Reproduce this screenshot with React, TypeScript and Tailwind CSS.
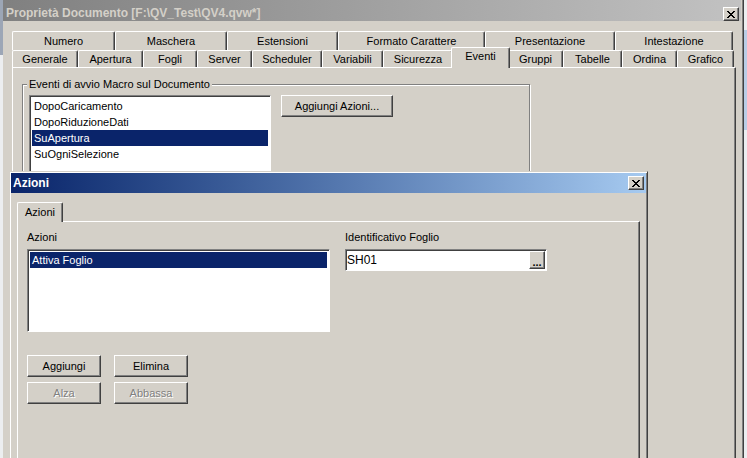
import type { ReactNode } from 'react';

const raised =
    'border border-t-white border-l-white border-r-[#404040] border-b-[#404040] shadow-[inset_-1px_-1px_0_#808080] bg-[#d4d0c8]';
const sunken =
    'border border-t-[#808080] border-l-[#808080] border-r-white border-b-white shadow-[inset_1px_1px_0_#404040] bg-white';

const backRow = [
    { label: 'Numero', w: 'w-[103px]' },
    { label: 'Maschera', w: 'w-[112px]' },
    { label: 'Estensioni', w: 'w-[111px]' },
    { label: 'Formato Carattere', w: 'w-[147px]' },
    { label: 'Presentazione', w: 'w-[130px]' },
    { label: 'Intestazione', w: 'w-[118px]' },
];

const frontRow = [
    { label: 'Generale', w: 'w-[66px]' },
    { label: 'Apertura', w: 'w-[65px]' },
    { label: 'Fogli', w: 'w-[54px]' },
    { label: 'Server', w: 'w-[55px]' },
    { label: 'Scheduler', w: 'w-[70px]' },
    { label: 'Variabili', w: 'w-[61px]' },
    { label: 'Sicurezza', w: 'w-[70px]' },
    { label: 'Eventi', w: 'w-[59px]', active: true },
    { label: 'Gruppi', w: 'w-[55px]' },
    { label: 'Tabelle', w: 'w-[59px]' },
    { label: 'Ordina', w: 'w-[55px]' },
    { label: 'Grafico', w: 'w-[57px]' },
];

const events = ['DopoCaricamento', 'DopoRiduzioneDati', 'SuApertura', 'SuOgniSelezione'];

// classic 8x7 close glyph
const xGlyph = ['11000011', '01100110', '00111100', '00011000', '00111100', '01100110', '11000011'];

function CloseButton() {
    return (
        <div className={`w-[16px] h-[14px] flex items-center justify-center ${raised}`}>
            <svg width="8" height="7" viewBox="0 0 8 7" shapeRendering="crispEdges">
                {xGlyph.map((row, y) =>
                    row.split('').map((c, x) =>
                        c === '1' ? <rect key={`${x}-${y}`} x={x} y={y} width="1" height="1" fill="#000" /> : null
                    )
                )}
            </svg>
        </div>
    );
}

function Button({ children, className = '', disabled }: { children: ReactNode; className?: string; disabled?: boolean }) {
    return (
        <div
            className={`flex items-center justify-center ${raised} ${className} ${
                disabled ? 'text-[#808080] [text-shadow:1px_1px_0_#fff]' : 'text-black'
            }`}
        >
            {children}
        </div>
    );
}

export default function App() {
    return (
        <div className="relative w-[747px] h-[458px] overflow-hidden bg-[#eceef0] font-['Liberation_Sans',Arial,sans-serif] text-[11px] leading-[13px] text-black">
            {/* windows behind */}
            <div className="absolute left-0 top-0 w-[3px] h-[55px] bg-[#9ca6b6]" />
            <div className="absolute right-0 top-[30px] w-[3px] h-[100px] bg-[#b9cde6]" />

            {/* Main window */}
            <div className="absolute left-[3px] top-0 w-[741px] h-[480px] bg-[#d4d0c8] border-r border-r-[#404040] shadow-[inset_-1px_0_0_#808080] flex flex-col">
                {/* Title bar */}
                <div className="h-[21px] mr-[2px] flex justify-between pl-[3px] pr-[2px] bg-linear-to-r from-[#808080] to-[#c2c2c2]">
                    <span className="pt-[6px] text-[12px] leading-[14px] font-bold text-[#d4d0c8]">
                        Proprietà Documento [F:\QV_Test\QV4.qvw*]
                    </span>
                    <div className="self-end">
                        <CloseButton />
                    </div>
                </div>

                {/* Tabs */}
                <div className="pl-[9px] pt-[10px]">
                    <div className="flex h-[19px]">
                        {backRow.map((t) => (
                            <div
                                key={t.label}
                                className={`${t.w} h-[19px] flex justify-center pt-[3px] border-t border-l border-t-white border-l-white border-r border-r-[#404040] shadow-[inset_-1px_0_0_#808080] rounded-t-[2px]`}
                            >
                                {t.label}
                            </div>
                        ))}
                    </div>
                    <div className="flex items-end h-[17px]">
                        {frontRow.map((t) =>
                            t.active ? (
                                <div
                                    key={t.label}
                                    className={`${t.w} -mx-[2px] h-[21px] -mb-[1px] relative z-10 bg-[#d4d0c8] flex justify-center pt-[2px] border-t border-l border-t-white border-l-white border-r border-r-[#404040] shadow-[inset_-1px_0_0_#808080] rounded-t-[2px]`}
                                >
                                    {t.label}
                                </div>
                            ) : (
                                <div
                                    key={t.label}
                                    className={`${t.w} h-[17px] flex items-center justify-center border-t border-l border-t-white border-l-white border-r border-r-[#404040] shadow-[inset_-1px_0_0_#808080] rounded-t-[2px]`}
                                >
                                    {t.label}
                                </div>
                            )
                        )}
                    </div>
                </div>

                {/* Tab panel */}
                <div className="ml-[9px] w-[724px] flex-1 border-t border-l border-t-white border-l-white border-r border-r-[#404040] shadow-[inset_-1px_0_0_#808080] pl-[9px] pt-[10px]">
                    <fieldset className="w-[508px] h-[140px] border border-[#808080] shadow-[inset_1px_1px_0_#fff,1px_1px_0_#fff] pl-[6px] pt-[4px]">
                        <legend className="-ml-[2px] px-[2px] bg-[#d4d0c8] leading-[13px]">
                            Eventi di avvio Macro sul Documento
                        </legend>
                        <div className="flex items-start">
                            <div className={`w-[242px] h-[110px] ${sunken} p-[2px]`}>
                                {events.map((e) => (
                                    <div
                                        key={e}
                                        className={`h-[16px] flex items-center pl-[2px] ${
                                            e === 'SuApertura' ? 'bg-[#0a246a] text-white' : ''
                                        }`}
                                    >
                                        {e}
                                    </div>
                                ))}
                            </div>
                            <Button className="ml-[10px] w-[112px] h-[22px]">Aggiungi Azioni...</Button>
                        </div>
                    </fieldset>
                </div>
            </div>

            {/* Azioni dialog */}
            <div className="absolute left-[9px] top-[171px] w-[639px] h-[300px] bg-[#d4d0c8] border border-[#d4d0c8] border-r-[#404040] border-b-[#404040] shadow-[inset_1px_1px_0_#fff,inset_-1px_-1px_0_#808080] p-[1px] flex flex-col">
                <div className="h-[20px] flex items-center justify-between pl-[2px] pr-[2px] bg-linear-to-r from-[#0a246a] to-[#a6caf0]">
                    <span className="text-[12px] leading-[14px] font-bold text-white">Azioni</span>
                    <CloseButton />
                </div>

                <div className="flex-1 flex flex-col pl-[6px] pt-[9px]">
                    <div className="flex h-[19px]">
                        <div className="w-[46px] h-[20px] relative z-10 bg-[#d4d0c8] flex justify-center pt-[3px] border-t border-l border-t-white border-l-white border-r border-r-[#404040] shadow-[inset_-1px_0_0_#808080] rounded-t-[2px]">
                            Azioni
                        </div>
                    </div>
                    <div className="w-[623px] flex-1 border-t border-l border-t-white border-l-white border-r border-r-[#404040] shadow-[inset_-1px_0_0_#808080] pl-[9px] pt-[9px]">
                        <div className="flex">
                            <div className="w-[303px] flex flex-col">
                                <span>Azioni</span>
                                <div className={`mt-[5px] h-[83px] ${sunken} p-[2px]`}>
                                    <div className="h-[16px] flex items-center pl-[2px] bg-[#0a246a] text-white">
                                        Attiva Foglio
                                    </div>
                                </div>
                            </div>
                            <div className="ml-[15px] flex flex-col">
                                <span>Identificativo Foglio</span>
                                <div className={`mt-[5px] w-[202px] h-[22px] ${sunken} flex items-center pl-[1px] pr-[1px]`}>
                                    <span className="flex-1 text-[12px] leading-[14px]">SH01</span>
                                    <div className={`w-[16px] h-[18px] ${raised} flex items-end justify-center pb-[2px] text-[11px] leading-[8px] font-bold`}>
                                        ...
                                    </div>
                                </div>
                            </div>
                        </div>
                        <div className="mt-[23px] grid grid-cols-[74px_74px] gap-x-[13px] gap-y-[5px]">
                            <Button className="h-[22px]">Aggiungi</Button>
                            <Button className="h-[22px]">Elimina</Button>
                            <Button className="h-[22px]" disabled>
                                Alza
                            </Button>
                            <Button className="h-[22px]" disabled>
                                Abbassa
                            </Button>
                        </div>
                    </div>
                </div>
            </div>
        </div>
    );
}
